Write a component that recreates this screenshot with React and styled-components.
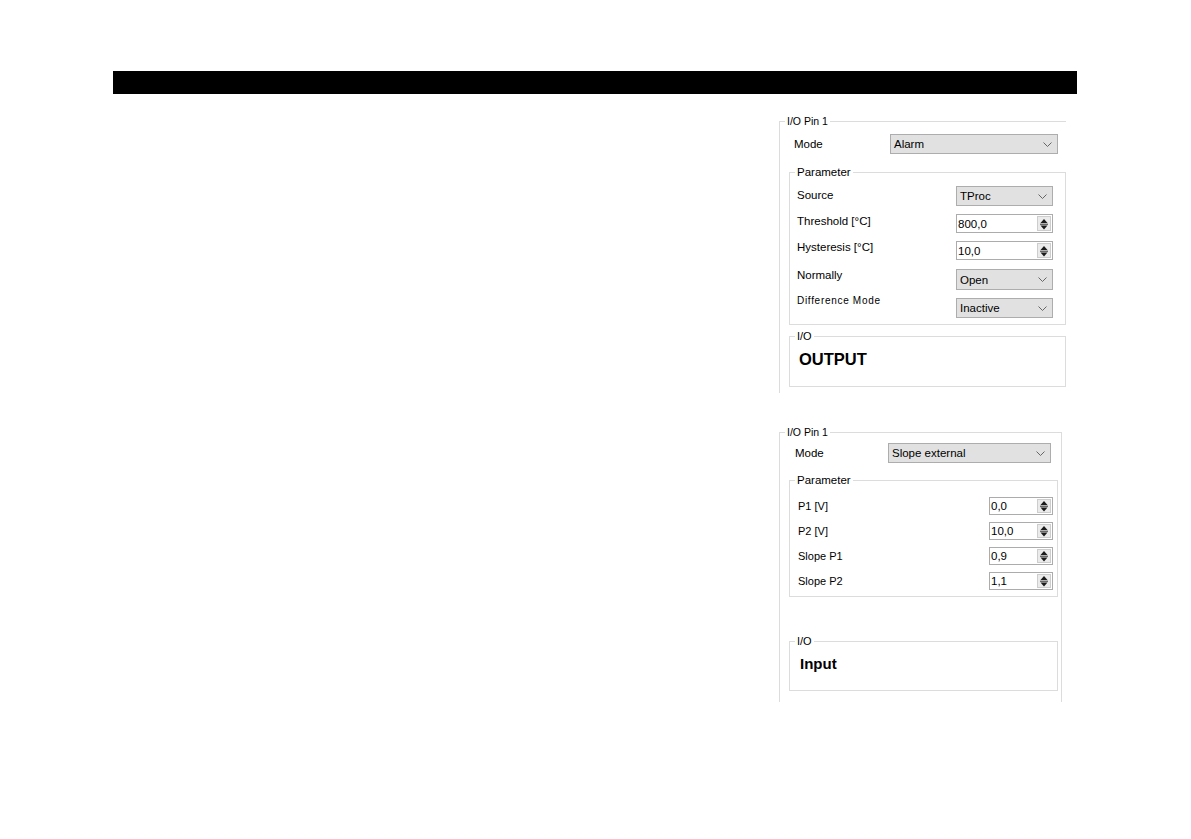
import React from "react";
import styled, { createGlobalStyle } from "styled-components";

const GlobalStyle = createGlobalStyle`
  html, body { margin: 0; padding: 0; background: #fff; }
  body {
    font-family: "Liberation Sans", Arial, sans-serif;
    font-size: 11px;
    color: #000;
  }
`;

const Page = styled.div`
  box-sizing: border-box;
  width: 1191px;
  min-height: 839px;
  padding: 71px 0 0 113px;
`;

const TopBar = styled.div`
  width: 964px;
  height: 23px;
  background: #000;
`;

const Column = styled.div`
  margin-left: 666px;
  display: flex;
  flex-direction: column;
`;

const Panel = styled.div`
  position: relative;
  box-sizing: border-box;
  width: ${(p) => p.$w}px;
  height: ${(p) => p.$h}px;
  margin-top: ${(p) => p.$mt}px;
  padding-top: ${(p) => p.$pt}px;
  border-top: 1px solid #dcdcdc;
  border-left: 1px solid #dcdcdc;
  border-right: ${(p) => (p.$right ? "1px solid #dcdcdc" : "none")};
  display: flex;
  flex-direction: column;
`;

const Group = styled.div`
  position: relative;
  box-sizing: border-box;
  width: ${(p) => p.$w}px;
  height: ${(p) => p.$h}px;
  margin: ${(p) => p.$mt}px 0 0 9px;
  padding: ${(p) => p.$pt}px ${(p) => p.$pr || 0}px 0 ${(p) => p.$pl}px;
  border: 1px solid #dcdcdc;
  display: flex;
  flex-direction: column;
`;

const Legend = styled.span`
  position: absolute;
  top: -7px;
  left: 5px;
  padding: 0 2px;
  background: #fff;
  font-size: ${(p) => p.$size || 11}px;
  line-height: 13px;
  white-space: nowrap;
`;

const ModeRow = styled.div`
  display: grid;
  grid-template-columns: ${(p) => p.$labelW}px ${(p) => p.$selW}px;
  padding-left: ${(p) => p.$pl}px;
  align-items: center;
  height: 20px;
`;

const Label = styled.span`
  font-size: ${(p) => p.$size || 11.5}px;
  line-height: 14px;
  margin-top: ${(p) => p.$dy || 0}px;
  letter-spacing: ${(p) => p.$ls || 0}px;
  white-space: nowrap;
`;

const Row = styled.div`
  display: flex;
  justify-content: space-between;
  align-items: flex-start;
  height: ${(p) => p.$h}px;
  flex: none;
`;

const Select = styled.div`
  box-sizing: border-box;
  width: ${(p) => p.$w}px;
  height: ${(p) => p.$h || 20}px;
  background: #e1e1e1;
  border: 1px solid #adadad;
  display: flex;
  align-items: center;
  justify-content: space-between;
  padding: 0 5px 0 3px;
  font-size: 11.5px;
`;

const Spin = styled.div`
  box-sizing: border-box;
  width: ${(p) => p.$w}px;
  height: ${(p) => p.$h || 19}px;
  background: #fff;
  border: 1px solid #acacac;
  display: flex;
  align-items: stretch;
  padding-left: 1px;
  font-size: 11.5px;
`;

const SpinValue = styled.span`
  flex: 1;
  display: flex;
  align-items: center;
`;

const SpinButtons = styled.div`
  box-sizing: border-box;
  width: 14px;
  margin: 1px 1px 1px 0;
  background: #ebebeb;
  border: 1px solid #cdcdcd;
  display: flex;
  align-items: center;
  justify-content: center;
`;

const Big = styled.div`
  font-weight: bold;
  font-size: ${(p) => p.$size}px;
  line-height: 20px;
  color: #000;
`;

const Chevron = () => (
  <svg width="9" height="5" viewBox="0 0 9 5">
    <path d="M0.5 0.5 L4.5 4.5 L8.5 0.5" fill="none" stroke="#666" strokeWidth="1" />
  </svg>
);

const SpinGlyph = () => (
  <svg width="10" height="14" viewBox="0 0 10 14">
    <polygon points="5,2 8.5,6 1.5,6" fill="#1a1a1a" />
    <rect x="1" y="6.7" width="8" height="1" fill="#333" />
    <polygon points="1.5,8.6 8.5,8.6 5,12.4" fill="#1a1a1a" />
  </svg>
);

const Dropdown = ({ w, h, value }) => (
  <Select $w={w} $h={h}>
    <span>{value}</span>
    <Chevron />
  </Select>
);

const SpinBox = ({ w, h, value }) => (
  <Spin $w={w} $h={h}>
    <SpinValue>{value}</SpinValue>
    <SpinButtons>
      <SpinGlyph />
    </SpinButtons>
  </Spin>
);

const alarmRows = [
  { label: "Source", h: 28, dy: 2, ctrl: { type: "select", value: "TProc", h: 20 } },
  { label: "Threshold [°C]", h: 27, dy: 0, ctrl: { type: "spin", value: "800,0", h: 19 } },
  { label: "Hysteresis [°C]", h: 28, dy: -1, ctrl: { type: "spin", value: "10,0", h: 19 } },
  { label: "Normally", h: 29, dy: -1, ctrl: { type: "select", value: "Open", h: 21 } },
  { label: "Difference Mode", h: 20, dy: -4, size: 10, ls: 0.7, ctrl: { type: "select", value: "Inactive", h: 20 } },
];

const slopeRows = [
  { label: "P1 [V]", h: 25, value: "0,0" },
  { label: "P2 [V]", h: 25, value: "10,0" },
  { label: "Slope P1", h: 25, value: "0,9" },
  { label: "Slope P2", h: 18, value: "1,1" },
];

export default function App() {
  return (
    <>
      <GlobalStyle />
      <Page>
        <TopBar />
        <Column>
          <Panel $w={287} $h={272} $mt={27} $pt={12}>
            <Legend $size={10.5}>I/O Pin 1</Legend>
            <ModeRow $pl={14} $labelW={96} $selW={168}>
              <Label>Mode</Label>
              <Dropdown w={168} h={20} value="Alarm" />
            </ModeRow>
            <Group $w={277} $h={153} $mt={18} $pt={13} $pl={7} $pr={12}>
              <Legend $size={11.5}>Parameter</Legend>
              {alarmRows.map((r) => (
                <Row key={r.label} $h={r.h}>
                  <Label $dy={r.dy} $size={r.size} $ls={r.ls}>
                    {r.label}
                  </Label>
                  {r.ctrl.type === "select" ? (
                    <Dropdown w={97} h={r.ctrl.h} value={r.ctrl.value} />
                  ) : (
                    <SpinBox w={97} h={r.ctrl.h} value={r.ctrl.value} />
                  )}
                </Row>
              ))}
            </Group>
            <Group $w={277} $h={51} $mt={11} $pt={12} $pl={9}>
              <Legend>I/O</Legend>
              <Big $size={16.5}>OUTPUT</Big>
            </Group>
          </Panel>

          <Panel $w={283} $h={270} $mt={39} $pt={10} $right>
            <Legend $size={10.5}>I/O Pin 1</Legend>
            <ModeRow $pl={15} $labelW={93} $selW={163}>
              <Label>Mode</Label>
              <Dropdown w={163} h={20} value="Slope external" />
            </ModeRow>
            <Group $w={269} $h={117} $mt={17} $pt={16} $pl={8} $pr={4}>
              <Legend $size={11.5}>Parameter</Legend>
              {slopeRows.map((r) => (
                <Row key={r.label} $h={r.h}>
                  <Label $size={11} $dy={2}>
                    {r.label}
                  </Label>
                  <SpinBox w={64} h={18} value={r.value} />
                </Row>
              ))}
            </Group>
            <Group $w={269} $h={50} $mt={44} $pt={12} $pl={10}>
              <Legend>I/O</Legend>
              <Big $size={15}>Input</Big>
            </Group>
          </Panel>
        </Column>
      </Page>
    </>
  );
}
